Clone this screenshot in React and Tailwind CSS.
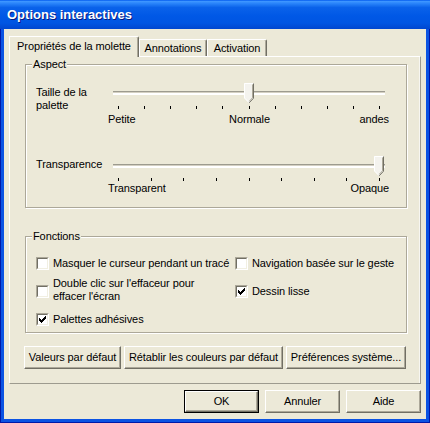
import React from "react";

function Button({ children, className = "", isDefault = false }) {
  const face = (
    <div className="flex h-full w-full items-center justify-center border border-t-white border-l-white border-r-[#716F64] border-b-[#716F64] bg-[#ECE9D8] shadow-[inset_-1px_-1px_0_#ACA899]">
      {children}
    </div>
  );
  if (isDefault) {
    return <div className={`h-[23px] border border-black ${className}`}>{face}</div>;
  }
  return <div className={`h-[23px] ${className}`}>{face}</div>;
}

function CheckBox({ checked, className = "" }) {
  const cols = [2, 3, 4, 3, 2, 1, 0];
  return (
    <span className={`block h-[13px] w-[13px] shrink-0 border border-t-[#ACA899] border-l-[#ACA899] border-r-white border-b-white ${className}`}>
      <span className="block h-full w-full border border-t-[#716F64] border-l-[#716F64] border-r-[#F1EFE2] border-b-[#F1EFE2] bg-white">
        {checked && (
          <svg width="9" height="9" className="block" shapeRendering="crispEdges">
            {cols.map((y, i) => (
              <rect key={i} x={1 + i} y={1 + y} width="1" height="3" fill="#000" />
            ))}
          </svg>
        )}
      </span>
    </span>
  );
}

function Group({ title, className = "", children }) {
  return (
    <div className={`relative border border-[#ACA899] shadow-[inset_1px_1px_0_#fff,1px_1px_0_#fff] ${className}`}>
      <span className="absolute -top-[7px] left-[6px] bg-[#ECE9D8] px-[1px]">{title}</span>
      {children}
    </div>
  );
}

function Slider({ value, ticks, tickY = 23, height = 27 }) {
  const xs = Array.from({ length: ticks }, (_, i) => Math.round(10 + (i * 261) / (ticks - 1)));
  const cx = xs[value];
  return (
    <svg width="283" height={height} className="block">
      <g shapeRendering="crispEdges">
        <rect x="5" y="8" width="272" height="1" fill="#9D9B8F" />
        <rect x="5" y="9" width="272" height="1" fill="#D4D0C2" />
        <rect x="5" y="10" width="272" height="2" fill="#FFFFFF" />
        {xs.map((x) => (
          <rect key={x} x={x} y={tickY} width="1" height="3" fill="#000" />
        ))}
      </g>
      <path d={`M${cx - 5} 0 H${cx + 5} V15 L${cx} 20 L${cx - 5} 15 Z`} fill="#F4F3EE" />
      <path d={`M${cx - 4.5} 15 V0.5 H${cx + 4.5}`} fill="none" stroke="#FFFFFF" />
      <path d={`M${cx + 4.5} 0.5 V15.2 L${cx} 20`} fill="none" stroke="#716F64" />
      <path d={`M${cx + 3.5} 1.5 V14.8 L${cx} 18.5`} fill="none" stroke="#ACA899" />
      <path d={`M${cx - 4.5} 15 L${cx} 19.5`} fill="none" stroke="#FFFFFF" />
    </svg>
  );
}

export default function App() {
  return (
    <div className="flex h-[423px] w-[430px] flex-col bg-[#0B53E3] shadow-[inset_1px_0_0_#0019A8,inset_-1px_0_0_#0019A8,inset_0_-1px_0_#0019A8] font-['Liberation_Sans',Arial,sans-serif] text-[11px] leading-[13px] tracking-[-0.1px] text-black">
      <div className="flex h-[29px] shrink-0 items-center bg-[linear-gradient(to_bottom,#0058EE_0%,#3D95FF_5%,#2B86FB_11%,#0A62EA_26%,#0058E6_55%,#0055E2_80%,#0046CF_100%)] pl-[7px] pb-[1px] text-[13px] font-bold tracking-normal text-white [text-shadow:1px_1px_0_#0A1A7E]">
        Options interactives
      </div>

      <div className="mx-[4px] mb-[4px] flex flex-1 flex-col bg-[#ECE9D8] px-[5px] pt-[7px] pb-[6px]">
        <div className="flex h-[20px] items-end">
          <div className="relative z-10 -mb-px flex h-[21px] w-[130px] items-center justify-center rounded-tr-[2px] border-t border-l border-r border-t-white border-l-white border-r-[#716F64] bg-[#ECE9D8] pb-[1px] shadow-[inset_-1px_0_0_#ACA899]">
            Propriétés de la molette
          </div>
          <div className="flex h-[17px] w-[68px] items-center justify-center rounded-tr-[2px] border-t border-l border-r border-t-white border-l-white border-r-[#716F64] shadow-[inset_-1px_0_0_#ACA899]">
            Annotations
          </div>
          <div className="flex h-[17px] w-[60px] items-center justify-center rounded-tr-[2px] border-t border-l border-r border-t-white border-l-white border-r-[#716F64] shadow-[inset_-1px_0_0_#ACA899]">
            Activation
          </div>
        </div>

        <div className="flex h-[328px] w-[412px] flex-col border border-t-white border-l-white border-r-[#9D9B8F] border-b-[#9D9B8F] pl-[15px] pt-[7px] shadow-[inset_-1px_0_0_#F7F6F1]">
          <Group title="Aspect" className="h-[144px] w-[382px] pl-[10px] pt-[18px]">
            <div className="flex">
              <div className="w-[72px] pt-[3px]">
                Taille de la
                <br />
                palette
              </div>
              <div>
                <Slider value={5} ticks={11} />
                <div className="mt-[3px] grid w-[283px] grid-cols-3">
                  <span>Petite</span>
                  <span className="text-center">Normale</span>
                  <span className="pr-[2px] text-right">andes</span>
                </div>
              </div>
            </div>
            <div className="mt-[30px] flex">
              <div className="w-[72px] pt-[2px]">Transparence</div>
              <div>
                <Slider value={8} ticks={9} tickY={22} height={26} />
                <div className="flex w-[283px] justify-between pr-[2px]">
                  <span>Transparent</span>
                  <span>Opaque</span>
                </div>
              </div>
            </div>
          </Group>

          <Group title="Fonctions" className="mt-[28px] h-[97px] w-[382px] pl-[10px] pt-[20px]">
            <div className="flex">
              <div className="flex h-[13px] w-[199px] items-center gap-[4px]">
                <CheckBox />
                <span>Masquer le curseur pendant un tracé</span>
              </div>
              <div className="flex h-[13px] items-center gap-[4px]">
                <CheckBox />
                <span>Navigation basée sur le geste</span>
              </div>
            </div>
            <div className="mt-[7px] flex">
              <div className="flex w-[199px] items-start gap-[4px]">
                <CheckBox checked={false} className="mt-[8px]" />
                <span>
                  Double clic sur l'effaceur pour
                  <br />
                  effacer l'écran
                </span>
              </div>
              <div className="mt-[8px] flex h-[13px] items-center gap-[4px]">
                <CheckBox checked />
                <span>Dessin lisse</span>
              </div>
            </div>
            <div className="mt-[10px] flex h-[13px] items-center gap-[4px]">
              <CheckBox checked />
              <span>Palettes adhésives</span>
            </div>
          </Group>

          <div className="-ml-px mt-[13px] flex gap-[3px]">
            <Button className="w-[97px]">Valeurs par défaut</Button>
            <Button className="w-[159px]">Rétablir les couleurs par défaut</Button>
            <Button className="w-[120px]">Préférences système...</Button>
          </div>
        </div>

        <div className="mt-[6px] flex justify-end gap-[6px]">
          <Button isDefault className="w-[75px]">OK</Button>
          <Button className="w-[75px]">Annuler</Button>
          <Button className="w-[75px]">Aide</Button>
        </div>
      </div>
    </div>
  );
}
